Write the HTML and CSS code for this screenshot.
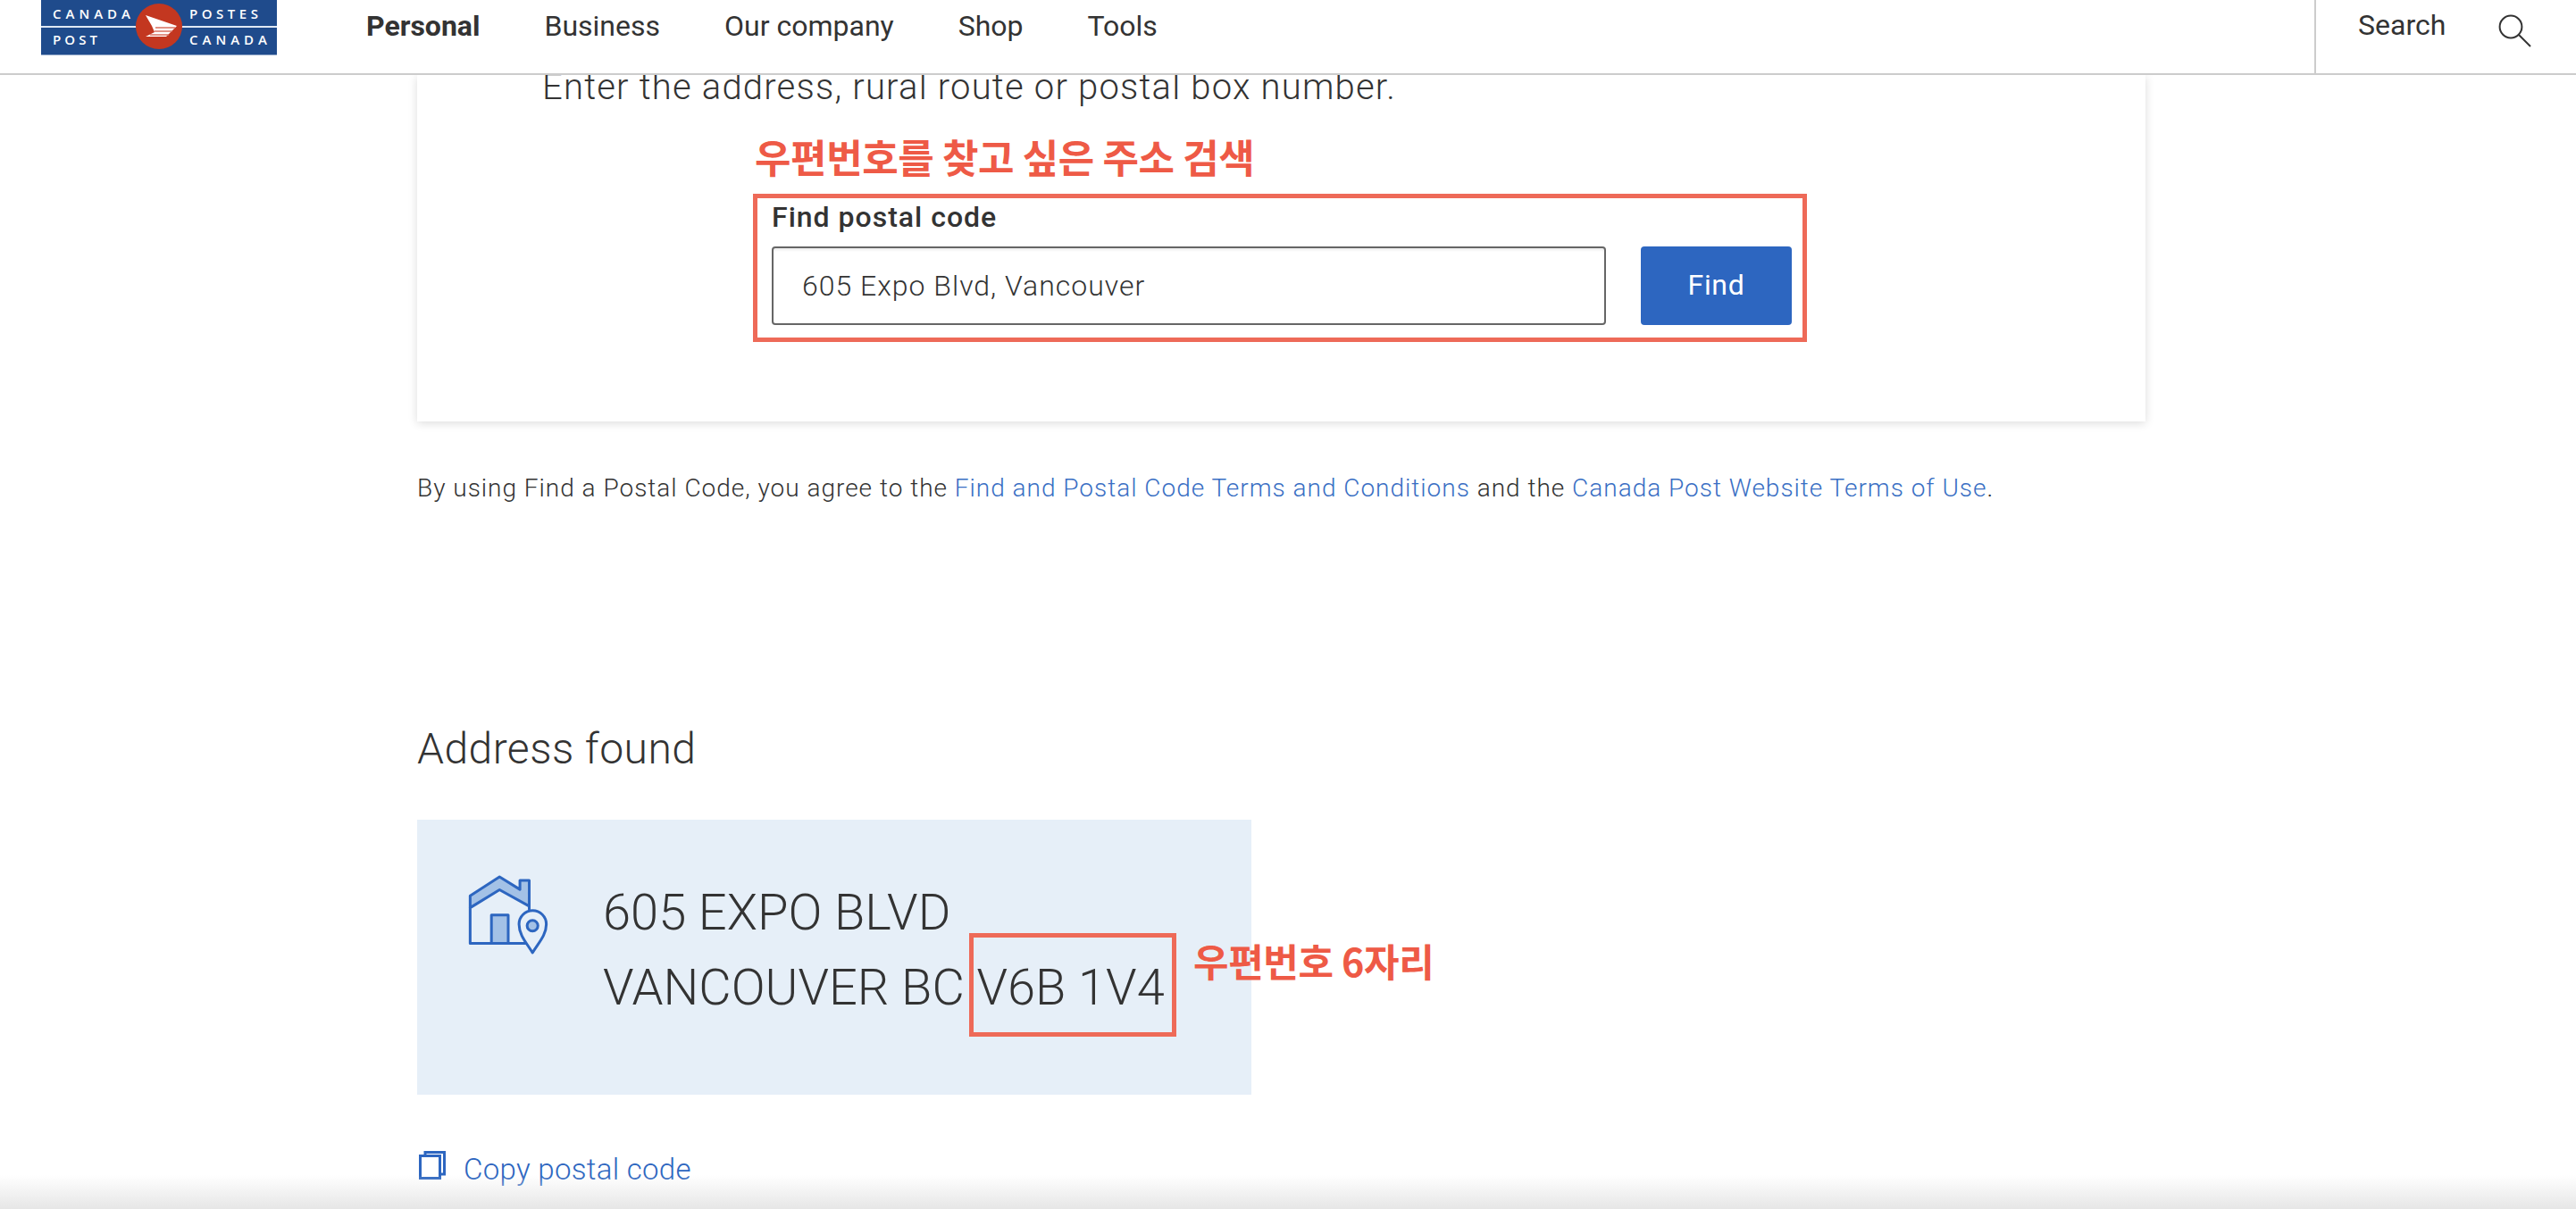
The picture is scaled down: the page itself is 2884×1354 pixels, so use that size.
FILE: index.html
```html
<!DOCTYPE html>
<html lang="en">
<head>
<meta charset="utf-8">
<title>Find a Postal Code</title>
<link rel="stylesheet" href="styles.css">
</head>
<body>
<header class="site-header">
  <svg class="logo" width="264" height="62" viewBox="0 0 264 62" aria-label="Canada Post">
    <rect class="logo-bg" x="0" y="-2" width="264" height="63.5"/>
    <rect class="logo-rule" x="0" y="29" width="264" height="2"/>
    <text class="logo-text" x="13" y="21" textLength="87">CANADA</text>
    <text class="logo-text" x="166" y="21" textLength="77">POSTES</text>
    <text class="logo-text" x="13" y="50" textLength="50">POST</text>
    <text class="logo-text" x="166" y="50" textLength="87">CANADA</text>
    <ellipse class="logo-oval" cx="132" cy="29.5" rx="26" ry="25.5"/>
    <path class="logo-arrow" d="M117 17 L152 29 L140 41 H117 L127 36 L124 29Z"/>
    <path class="logo-stripe" d="M128 31 H150 M127 35 H147 M122 39 H143"/>
  </svg>
  <nav class="main-nav">
    <a class="nav-link nav-active">Personal</a>
    <a class="nav-link">Business</a>
    <a class="nav-link">Our company</a>
    <a class="nav-link">Shop</a>
    <a class="nav-link">Tools</a>
  </nav>
  <div class="search-box">
    <span class="search-label">Search</span>
    <svg class="search-icon" width="40" height="38" viewBox="0 0 40 38"><circle cx="15" cy="14" r="12.4"/><path d="M24 23 L37 36"/></svg>
  </div>
</header>
<main class="page">
  <section class="card">
    <p class="intro">Enter the address, rural route or postal box number.</p>
    <div class="form-area">
      <p class="note note-search">우편번호를 찾고 싶은 주소 검색</p>
      <form class="form-frame">
        <label class="form-label">Find postal code</label>
        <div class="form-row">
          <div class="field">605 Expo Blvd, Vancouver</div>
          <div class="find-button">Find</div>
        </div>
      </form>
    </div>
  </section>
  <p class="terms">By using Find a Postal Code, you agree to the <a class="link">Find and Postal Code Terms and Conditions</a> and the <a class="link">Canada Post Website Terms of Use</a>.</p>
  <h2 class="found-title">Address found</h2>
  <div class="result">
    <svg class="house" width="94" height="94" viewBox="190 60 280 280">
      <path class="house-fill" d="M200 135 L298 72 L366 114 V84 H397 V170 L298 115 L200 175Z"/>
      <path class="house-line" d="M385 294 H200 V135 L298 72 L366 114 V84 H397 V180 M200 175 L298 115 L397 170"/>
      <rect class="house-fill house-line" x="271" y="199" width="56" height="95"/>
      <path class="house-pin" d="M408 325 C388 292 363 266 363 230 A45.500 45.500 0 0 1 454 230 C454 266 428 292 408 325Z"/>
      <circle class="house-fill house-line" cx="408" cy="235" r="18"/>
    </svg>
    <address class="address">605 EXPO BLVD<br>VANCOUVER BC V6B 1V4</address>
    <div class="postal-mark"></div>
    <p class="note note-postal">우편번호 6자리</p>
  </div>
  <a class="copy-link">
    <svg class="copy-icon" width="30" height="32" viewBox="0 0 30 32"><path d="M7 5 V1.500 H28.500 V26 H24"/><rect x="1.500" y="5.500" width="22" height="25"/></svg>
    <span>Copy postal code</span>
  </a>
</main>
<div class="bottom-fade"></div>
</body>
</html>
```
FILE: styles.css
```css
* { box-sizing: border-box; }
html, body { margin: 0; padding: 0; }
body {
  height: 1354px;
  overflow: hidden;
  position: relative;
  background: #fff;
  color: #333;
  font-family: Roboto, "Noto Sans CJK KR", sans-serif;
}
p, h2, address { margin: 0; font-style: normal; }

.site-header {
  height: 84px;
  display: flex;
  align-items: flex-start;
  padding-left: 46px;
  border-bottom: 2px solid #ccc;
  background: #fff;
  position: relative;
  z-index: 2;
}
.logo { flex: none; display: block; }
.logo-bg { fill: #1f4b8c; }
.logo-rule { fill: #dfe8f4; }
.logo-text { fill: #fff; font: 600 15px "Open Sans", sans-serif; }
.logo-oval { fill: #c33720; }
.logo-arrow { fill: #fff; }
.logo-stripe { fill: none; stroke: #d8705f; stroke-width: 1.300; }

.main-nav {
  display: flex;
  gap: 72px;
  margin-left: 100px;
  height: 57px;
  align-items: center;
}
.nav-link { font-size: 32px; font-weight: 400; color: #333; }
.nav-active { font-weight: 700; }

.search-box {
  margin-left: auto;
  width: 293px;
  height: 82px;
  border-left: 2px solid #ccc;
  display: flex;
  padding-left: 47px;
  padding-top: 9px;
  gap: 58px;
}
.search-label { font-size: 32px; line-height: 38px; }
.search-icon { margin-top: 7px; }
.search-icon circle, .search-icon path { fill: none; stroke: #333; stroke-width: 2; }

.page { width: 1935px; margin-left: 467px; }

.card {
  height: 388px;
  background: #fff;
  box-shadow: 0 2px 10px rgba(0, 0, 0, 0.14);
  padding-left: 140px;
}
.intro {
  font-size: 40px;
  font-weight: 300;
  line-height: 28px;
  letter-spacing: 1.2px;
  white-space: nowrap;
}
.form-area { margin-left: 236px; width: 1180px; }
.note {
  color: #ee5a46;
  font-family: "Noto Sans CJK KR", sans-serif;
  font-weight: 700;
  white-space: nowrap;
}
.note-search { font-size: 44px; line-height: 60px; margin: 33px 0 0 2px; letter-spacing: -0.4px; }
.form-frame {
  display: block;
  margin-top: 12px;
  height: 166px;
  border: 5px solid #ee6a58;
  padding: 3px 16px 0;
}
.form-label {
  display: block;
  font-size: 32px;
  font-weight: 500;
  line-height: 36px;
  letter-spacing: 1px;
}
.form-row { display: flex; gap: 39px; margin-top: 15px; }
.field {
  flex: none;
  width: 934px;
  height: 88px;
  border: 2px solid #666;
  border-radius: 4px;
  padding-left: 32px;
  font-size: 32px;
  font-weight: 300;
  line-height: 84px;
  letter-spacing: 1px;
  box-shadow: inset 0 2px 3px rgba(0, 0, 0, 0.08);
}
.find-button {
  flex: none;
  width: 169px;
  height: 88px;
  border-radius: 4px;
  background: #2d66c0;
  color: #fff;
  font-size: 32px;
  font-weight: 400;
  line-height: 86px;
  text-align: center;
  letter-spacing: 0.7px;
}

.terms {
  margin-top: 59px;
  font-size: 28px;
  font-weight: 300;
  line-height: 32px;
  letter-spacing: 0.99px;
  white-space: nowrap;
}
.link { color: #3a6fc4; }

.found-title {
  margin-top: 241px;
  font-size: 48px;
  font-weight: 300;
  line-height: 70px;
  letter-spacing: 0.45px;
}

.result {
  position: relative;
  margin-top: 44px;
  width: 934px;
  height: 308px;
  background: #e6eff8;
  display: flex;
  padding: 60px 0 0 56px;
  gap: 58px;
}
.house { flex: none; }
.house-fill { fill: #a3c1e6; }
.house-line { fill: none; stroke: #2d66c0; stroke-width: 9; stroke-linejoin: round; stroke-linecap: round; }
.house-fill.house-line { fill: #a3c1e6; }
.house-pin { fill: #e6eff8; stroke: #2d66c0; stroke-width: 9; stroke-linejoin: round; }
.address {
  margin-top: 2px;
  font-size: 56px;
  font-weight: 300;
  line-height: 84px;
  white-space: nowrap;
}
.postal-mark {
  position: absolute;
  left: 618px;
  top: 127px;
  width: 232px;
  height: 116px;
  border: 5px solid #ee6a58;
}
.note-postal {
  position: absolute;
  left: 869px;
  top: 127px;
  font-size: 43px;
  line-height: 60px;
  letter-spacing: -0.4px;
}

.copy-link {
  display: flex;
  align-items: flex-start;
  gap: 20px;
  margin-top: 64px;
  color: #2d66c0;
  font-size: 33px;
  font-weight: 300;
  line-height: 40px;
  letter-spacing: 0.3px;
  padding-left: 2px;
}
.copy-icon { flex: none; margin-top: -1px; }
.copy-icon path, .copy-icon rect { fill: #fff; stroke: #2d66c0; stroke-width: 3; }

.bottom-fade {
  position: absolute;
  left: 0;
  right: 0;
  bottom: 0;
  height: 38px;
  background: linear-gradient(to bottom, rgba(232, 232, 232, 0), #e6e6e6);
  pointer-events: none;
}
```
